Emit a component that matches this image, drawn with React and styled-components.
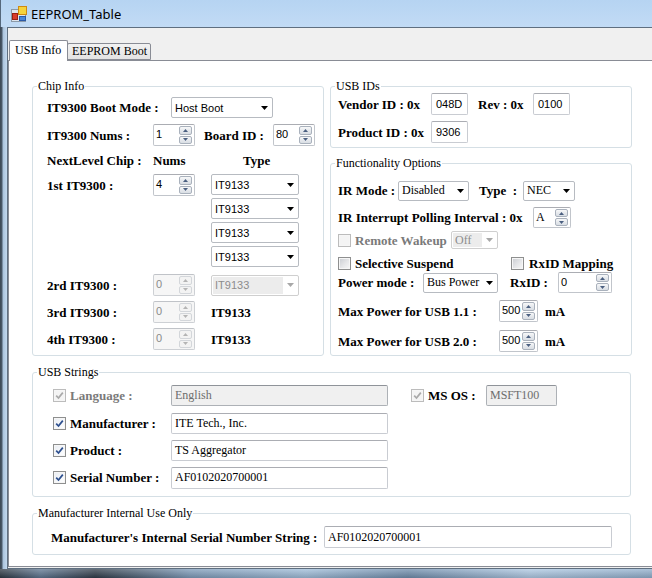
import React from "react";
import styled, { createGlobalStyle } from "styled-components";

const SERIF = `"Liberation Serif", "Times New Roman", serif`;
const SANS = `"Liberation Sans", Arial, sans-serif`;
const UI = `"Noto Sans", "Open Sans", sans-serif`;

const GlobalStyle = createGlobalStyle`
  * { box-sizing: border-box; }
  html, body { margin: 0; padding: 0; background: #fff; }
  body { width: 652px; height: 578px; overflow: hidden; }
  #root { width: 652px; height: 578px; overflow: hidden; }
`;

const Window = styled.div`
  width: 680px;
  height: 578px;
  display: flex;
  flex-direction: column;
`;

const TitleBar = styled.div`
  flex: none;
  height: 27px;
  display: flex;
  align-items: center;
  gap: 4px;
  padding-left: 10px;
  background: linear-gradient(180deg, #b6d4f2 0%, #c2dbf5 100%);
  border-left: 1px solid #55687c;
`;

const Title = styled.span`
  font-family: ${UI};
  font-size: 13px;
  color: #000;
`;

const Middle = styled.div`
  flex: none;
  height: 542px;
  display: flex;
`;

const SideFrame = styled.div`
  flex: none;
  width: 7px;
  background: linear-gradient(90deg, #3b4754 0px, #4c5b6b 2px, #aac3dc 3px, #c3d8ee 7px);
`;

const Client = styled.div`
  flex: 1;
  display: flex;
  flex-direction: column;
  background: #f0f0f0;
  border: 1px solid #5f6f80;
  border-right: none;
`;

const BottomFrame = styled.div`
  flex: none;
  height: 9px;
  background:
    linear-gradient(180deg, rgba(255,255,255,0.25), rgba(0,0,0,0.15)),
    linear-gradient(90deg, #2c3742 0%, #5d7590 6%, #2f3b48 14%, #7d9ab8 28%, #9fbcd8 45%, #6f8cab 60%, #aec8e2 78%, #8aa8c6 100%);
`;

const TabStrip = styled.div`
  flex: none;
  height: 32px;
  display: flex;
  align-items: flex-end;
  padding-left: 1px;
`;

const Tab = styled.div`
  flex: none;
  position: relative;
  z-index: ${(p) => (p.$active ? 2 : 1)};
  height: ${(p) => (p.$active ? 21 : 17)}px;
  margin-bottom: ${(p) => (p.$active ? -1 : 0)}px;
  margin-left: ${(p) => (p.$active ? 0 : -1)}px;
  min-width: ${(p) => p.$w}px;
  padding: 0 3px ${(p) => (p.$active ? 2 : 0)}px ${(p) => (p.$active ? 5 : 4)}px;
  display: flex;
  align-items: center;
  border: 1px solid #898c95;
  border-bottom: ${(p) => (p.$active ? "none" : "1px solid #898c95")};
  border-radius: 2px 2px 0 0;
  background: ${(p) => (p.$active ? "#fff" : "linear-gradient(180deg, #f2f2f2, #e3e3e3)")};
  font-family: ${SERIF};
  font-size: 12px;
  color: #000;
  white-space: nowrap;
`;

const Page = styled.div`
  flex: none;
  height: 507px;
  background: #fff;
  border: 1px solid #898c95;
  padding: 25px 0 0 23px;
  display: flex;
  flex-direction: column;
`;

const TopGrid = styled.div`
  display: grid;
  grid-template-columns: 292px 302px;
  column-gap: 6px;
  width: 600px;
`;

const RightCol = styled.div`
  display: flex;
  flex-direction: column;
  gap: 15px;
`;

const Group = styled.div`
  display: flex;
  flex-direction: column;
  border: 1px solid #d5dfe5;
  border-radius: 3px;
  width: ${(p) => (p.$w ? `${p.$w}px` : "auto")};
  margin-top: ${(p) => p.$mt || 0}px;
  flex: ${(p) => (p.$grow ? 1 : "none")};
`;

const Legend = styled.div`
  align-self: flex-start;
  margin: -8px 0 0 4px;
  padding: 0 1px;
  height: 14px;
  line-height: 14px;
  background: #fff;
  font-family: ${SERIF};
  font-size: 12px;
  color: #000;
  white-space: nowrap;
`;

const GroupBody = styled.div`
  display: flex;
  flex-direction: column;
  padding: 0 0 ${(p) => p.$pb}px ${(p) => p.$pl}px;
`;

const Row = styled.div`
  flex: none;
  display: flex;
  align-items: center;
  height: ${(p) => p.$h}px;
  margin-top: ${(p) => p.$mt || 0}px;
`;

const Block = styled.div`
  flex: none;
  display: flex;
  align-items: flex-start;
  margin-top: ${(p) => p.$mt || 0}px;
`;

const Stack = styled.div`
  display: flex;
  flex-direction: column;
  gap: 3px;
`;

const Cell = styled.div`
  flex: none;
  width: ${(p) => p.$w}px;
  display: flex;
  align-items: center;
`;

const Label = styled.span`
  flex: none;
  width: ${(p) => (p.$w ? `${p.$w}px` : "auto")};
  margin-left: ${(p) => p.$ml || 0}px;
  padding-left: ${(p) => p.$pl || 0}px;
  font-family: ${SERIF};
  font-weight: 700;
  font-size: 13px;
  line-height: 15px;
  white-space: pre;
  color: ${(p) => (p.$muted ? "#7a7a7a" : "#000")};
`;

const Field = styled.div`
  flex: none;
  width: ${(p) => p.$w}px;
  height: ${(p) => p.$h || 22}px;
  margin-left: ${(p) => p.$ml || 0}px;
  display: flex;
  align-items: center;
  padding-left: ${(p) => p.$pad ?? 3}px;
  border: 1px solid ${(p) => (p.$disabled ? "#adb1b6" : "#c9ccd2")};
  border-top-color: ${(p) => (p.$disabled ? "#8f9399" : "#abadb3")};
  border-radius: 2px;
  background: ${(p) => (p.$disabled ? "#f0f0f0" : "#fff")};
  color: ${(p) => (p.$disabled ? "#6d6d6d" : "#000")};
  font-family: ${(p) => (p.$serif ? SERIF : SANS)};
  font-size: ${(p) => (p.$serif ? 12 : 11)}px;
  white-space: nowrap;
  overflow: hidden;
`;

const ComboShell = styled.div`
  flex: none;
  width: ${(p) => p.$w}px;
  height: ${(p) => p.$h || 21}px;
  margin-left: ${(p) => p.$ml || 0}px;
  display: flex;
  align-items: center;
  padding: 1px 4px 1px 1px;
  border: 1px solid ${(p) => (p.$disabled ? "#cfcfcf" : "#b7bbc1")};
  border-radius: 2px;
  background: #fff;
`;

const ComboValue = styled.span`
  flex: 1;
  align-self: stretch;
  display: flex;
  align-items: center;
  padding-left: 2px;
  margin-right: 4px;
  background: ${(p) => (p.$disabled ? "#ececec" : "transparent")};
  color: ${(p) => (p.$disabled ? "#8c8c8c" : "#000")};
  font-family: ${(p) => (p.$serif ? SERIF : SANS)};
  font-size: ${(p) => (p.$serif ? 12 : 11)}px;
  white-space: nowrap;
  overflow: hidden;
`;

const NumShell = styled.div`
  flex: none;
  width: ${(p) => p.$w}px;
  height: ${(p) => p.$h || 22}px;
  margin-left: ${(p) => p.$ml || 0}px;
  display: flex;
  align-items: stretch;
  border: 1px solid ${(p) => (p.$disabled ? "#cdd0d4" : "#c1c5cb")};
  border-top-color: ${(p) => (p.$disabled ? "#c0c3c8" : "#abadb3")};
  border-radius: 2px;
  background: ${(p) => (p.$disabled ? "#f6f6f6" : "#fff")};
`;

const NumValue = styled.span`
  flex: 1;
  padding: 2px 0 0 2px;
  font-family: ${(p) => (p.$serif ? SERIF : SANS)};
  font-size: ${(p) => (p.$serif ? 12 : 11)}px;
  line-height: 14px;
  color: ${(p) => (p.$disabled ? "#8a8a8a" : "#000")};
  white-space: nowrap;
  overflow: hidden;
`;

const Spin = styled.div`
  flex: none;
  width: 15px;
  display: flex;
  flex-direction: column;
  gap: 1px;
  padding: 1px 2px 1px 0;
`;

const SpinBtn = styled.span`
  flex: 1;
  display: flex;
  align-items: center;
  justify-content: center;
  border: 1px solid ${(p) => (p.$disabled ? "#d3d6da" : "#a9b1bc")};
  border-radius: 2px;
  background: ${(p) =>
    p.$disabled ? "#f3f3f3" : "linear-gradient(180deg, #f7f8f9 0%, #e6e9ed 50%, #d9dee4 100%)"};
`;

const CheckShell = styled.span`
  flex: none;
  width: 13px;
  height: 13px;
  margin-left: ${(p) => p.$ml || 0}px;
  display: flex;
  align-items: center;
  justify-content: center;
  border: 1px solid ${(p) => (p.$disabled ? "#bcbcbc" : "#8e8f8f")};
  box-shadow: inset 0 0 0 1px #f6f6f6;
  background: ${(p) =>
    p.$disabled
      ? "#f4f4f4"
      : p.$checked
      ? "linear-gradient(135deg, #e9edf3, #ffffff)"
      : "linear-gradient(135deg, #c9ccd1 0%, #e6e7e9 55%, #f8f8f8 100%)"};
`;

const DownArrow = ({ color = "#000" }) => (
  <svg width="7" height="4" viewBox="0 0 7 4" style={{ flex: "none" }}>
    <path d="M0 0H7L3.5 4Z" fill={color} />
  </svg>
);

const SpinArrow = ({ up, color }) => (
  <svg width="5" height="3" viewBox="0 0 5 3">
    <path d={up ? "M0 3H5L2.5 0Z" : "M0 0H5L2.5 3Z"} fill={color} />
  </svg>
);

const Combo = ({ w, h, ml, value, serif, disabled }) => (
  <ComboShell $w={w} $h={h} $ml={ml} $disabled={disabled}>
    <ComboValue $serif={serif} $disabled={disabled}>{value}</ComboValue>
    <DownArrow color={disabled ? "#a8a8a8" : "#000"} />
  </ComboShell>
);

const Numeric = ({ w, h, ml, value, serif, disabled }) => {
  const c = disabled ? "#b4b4b4" : "#4a5f80";
  return (
    <NumShell $w={w} $h={h} $ml={ml} $disabled={disabled}>
      <NumValue $serif={serif} $disabled={disabled}>{value}</NumValue>
      <Spin>
        <SpinBtn $disabled={disabled}><SpinArrow up color={c} /></SpinBtn>
        <SpinBtn $disabled={disabled}><SpinArrow color={c} /></SpinBtn>
      </Spin>
    </NumShell>
  );
};

const CheckBox = ({ checked, disabled, ml }) => (
  <CheckShell $checked={checked} $disabled={disabled} $ml={ml}>
    {checked && (
      <svg width="9" height="9" viewBox="0 0 9 9">
        <path
          d="M1.2 4.6 L3.5 7 L7.8 1.6"
          fill="none"
          stroke={disabled ? "#a9a9a9" : "#2d4f8e"}
          strokeWidth="1.7"
        />
      </svg>
    )}
  </CheckShell>
);

const AppIcon = () => (
  <svg width="16" height="16" viewBox="0 0 16 16" style={{ flex: "none" }}>
    <rect x="0.5" y="3.5" width="14" height="12" fill="#dfe6ee" stroke="#8c9aa8" />
    <rect x="1.5" y="7.5" width="5" height="6" fill="#d83b2b" stroke="#9a1f14" />
    <rect x="7.5" y="0.5" width="8" height="8" fill="#f6d33c" stroke="#d08a12" />
    <rect x="8.5" y="10.5" width="6" height="4" fill="#4a86d8" stroke="#2a5aa8" />
  </svg>
);

const chipTypes = ["IT9133", "IT9133", "IT9133", "IT9133"];

export default function App() {
  return (
    <>
      <GlobalStyle />
      <Window>
        <TitleBar>
          <AppIcon />
          <Title>EEPROM_Table</Title>
        </TitleBar>
        <Middle>
          <SideFrame />
          <Client>
            <TabStrip>
              <Tab $active $w={59}>USB Info</Tab>
              <Tab $w={81}>EEPROM Boot</Tab>
            </TabStrip>
            <Page>
              <TopGrid>
                <Group>
                  <Legend>Chip Info</Legend>
                  <GroupBody $pl={14} $pb={5}>
                    <Row $h={21} $mt={4}>
                      <Label $w={124}>IT9300 Boot Mode :</Label>
                      <Combo w={102} value="Host Boot" />
                    </Row>
                    <Row $h={22} $mt={6}>
                      <Label $w={106}>IT9300 Nums :</Label>
                      <Numeric w={42} value="1" />
                      <Label $w={69} $ml={9}>Board ID :</Label>
                      <Numeric w={42} value="80" />
                    </Row>
                    <Row $h={14} $mt={7}>
                      <Label $w={106}>NextLevel Chip :</Label>
                      <Label $w={58}>Nums</Label>
                      <Label $pl={32}>Type</Label>
                    </Row>
                    <Block $mt={7}>
                      <Row $h={22}>
                        <Label $w={106}>1st IT9300 :</Label>
                        <Cell $w={58}>
                          <Numeric w={42} value="4" />
                        </Cell>
                      </Row>
                      <Stack>
                        {chipTypes.map((t, i) => (
                          <Combo key={i} w={88} value={t} />
                        ))}
                      </Stack>
                    </Block>
                    <Row $h={22} $mt={7}>
                      <Label $w={106}>2rd IT9300 :</Label>
                      <Cell $w={58}>
                        <Numeric w={42} value="0" disabled />
                      </Cell>
                      <Combo w={88} value="IT9133" disabled />
                    </Row>
                    <Row $h={22} $mt={5}>
                      <Label $w={106}>3rd IT9300 :</Label>
                      <Cell $w={58}>
                        <Numeric w={42} value="0" disabled />
                      </Cell>
                      <Label>IT9133</Label>
                    </Row>
                    <Row $h={22} $mt={5}>
                      <Label $w={106}>4th IT9300 :</Label>
                      <Cell $w={58}>
                        <Numeric w={42} value="0" disabled />
                      </Cell>
                      <Label>IT9133</Label>
                    </Row>
                  </GroupBody>
                </Group>

                <RightCol>
                  <Group>
                    <Legend>USB IDs</Legend>
                    <GroupBody $pl={7} $pb={4}>
                      <Row $h={22}>
                        <Label $w={93}>Vendor ID : 0x</Label>
                        <Field $w={37} $pad={4}>048D</Field>
                        <Label $w={55} $ml={10}>Rev : 0x</Label>
                        <Field $w={37} $pad={4}>0100</Field>
                      </Row>
                      <Row $h={22} $mt={6}>
                        <Label $w={93}>Product ID : 0x</Label>
                        <Field $w={37} $pad={4}>9306</Field>
                      </Row>
                    </GroupBody>
                  </Group>

                  <Group $grow>
                    <Legend>Functionality Options</Legend>
                    <GroupBody $pl={7} $pb={3}>
                      <Row $h={21} $mt={10}>
                        <Label $w={60}>IR Mode :</Label>
                        <Combo w={71} h={20} value="Disabled" serif />
                        <Label $w={44} $ml={10}>{"Type  :"}</Label>
                        <Combo w={52} h={20} value="NEC" serif />
                      </Row>
                      <Row $h={21} $mt={6}>
                        <Label $w={195}>IR Interrupt Polling Interval : 0x</Label>
                        <Numeric w={38} h={21} value="A" serif />
                      </Row>
                      <Row $h={18} $mt={3}>
                        <CheckBox disabled />
                        <Label $w={96} $ml={4} $muted>Remote Wakeup</Label>
                        <Combo w={47} h={18} value="Off" serif disabled />
                      </Row>
                      <Row $h={16} $mt={6}>
                        <CheckBox />
                        <Label $w={156} $ml={4}>Selective Suspend</Label>
                        <CheckBox />
                        <Label $ml={5}>RxID Mapping</Label>
                      </Row>
                      <Row $h={21} $mt={1}>
                        <Label $w={85}>Power mode :</Label>
                        <Combo w={75} h={20} value="Bus Power" serif />
                        <Label $w={48} $ml={12}>RxID :</Label>
                        <Numeric w={54} h={21} value="0" />
                      </Row>
                      <Row $h={22} $mt={7}>
                        <Label $w={161}>Max Power for USB 1.1 :</Label>
                        <Numeric w={39} value="500" />
                        <Label $ml={7}>mA</Label>
                      </Row>
                      <Row $h={22} $mt={8}>
                        <Label $w={161}>Max Power for USB 2.0 :</Label>
                        <Numeric w={39} value="500" />
                        <Label $ml={7}>mA</Label>
                      </Row>
                    </GroupBody>
                  </Group>
                </RightCol>
              </TopGrid>

              <Group $w={599} $mt={16}>
                <Legend>USB Strings</Legend>
                <GroupBody $pl={20} $pb={8}>
                  <Row $h={23} $mt={5}>
                    <CheckBox checked disabled />
                    <Label $w={101} $ml={4} $muted>Language :</Label>
                    <Field $w={217} $h={21} $serif $disabled>English</Field>
                    <CheckBox checked disabled ml={23} />
                    <Label $w={58} $ml={4}>MS OS :</Label>
                    <Field $w={71} $h={21} $serif $disabled>MSFT100</Field>
                  </Row>
                  <Row $h={21} $mt={6}>
                    <CheckBox checked />
                    <Label $w={101} $ml={4}>Manufacturer :</Label>
                    <Field $w={217} $h={21} $serif>ITE Tech., Inc.</Field>
                  </Row>
                  <Row $h={21} $mt={6}>
                    <CheckBox checked />
                    <Label $w={101} $ml={4}>Product :</Label>
                    <Field $w={217} $h={21} $serif>TS Aggregator</Field>
                  </Row>
                  <Row $h={21} $mt={6}>
                    <CheckBox checked />
                    <Label $w={101} $ml={4}>Serial Number :</Label>
                    <Field $w={217} $h={22} $serif>AF0102020700001</Field>
                  </Row>
                </GroupBody>
              </Group>

              <Group $w={599} $mt={16}>
                <Legend>Manufacturer Internal Use Only</Legend>
                <GroupBody $pl={18} $pb={6}>
                  <Row $h={22} $mt={6}>
                    <Label $w={273}>Manufacturer's Internal Serial Number String :</Label>
                    <Field $w={288} $h={22} $serif>AF0102020700001</Field>
                  </Row>
                </GroupBody>
              </Group>
            </Page>
          </Client>
        </Middle>
        <BottomFrame />
      </Window>
    </>
  );
}
